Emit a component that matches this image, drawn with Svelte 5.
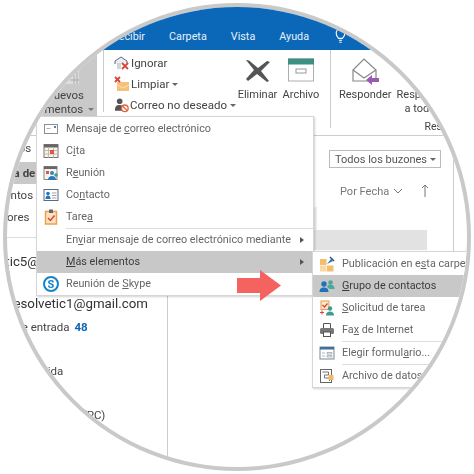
<script>
    const tabs = ["Recibir", "Carpeta", "Vista", "Ayuda"]

    const mainItems = [
        { icon: "mail", pre: "Mensaje de ", key: "c", post: "orreo electrónico" },
        { icon: "cal", pre: "C", key: "i", post: "ta" },
        { icon: "meet", pre: "R", key: "e", post: "unión" },
        { icon: "card", pre: "Co", key: "n", post: "tacto" },
        { icon: "task", pre: "Tare", key: "a", post: "", sep: true },
        { pre: "En", key: "v", post: "iar mensaje de correo electrónico mediante", arrow: true },
        { pre: "", key: "M", post: "ás elementos", arrow: true, active: true },
        { icon: "skype", pre: "Reunión de ", key: "S", post: "kype" }
    ]

    const subItems = [
        { icon: "post", pre: "Publicación en e", key: "s", post: "ta carpeta" },
        { icon: "group", pre: "", key: "G", post: "rupo de contactos", active: true },
        { icon: "request", pre: "", key: "S", post: "olicitud de tarea" },
        { icon: "fax", pre: "Fa", key: "x", post: " de Internet", sep: true },
        { icon: "form", pre: "Elegir formul", key: "a", post: "rio...", sep: true },
        { icon: "data", pre: "Archivo de datos", key: "", post: "" }
    ]
</script>

{#snippet icon(name)}
    <svg class="ico" viewBox="0 0 16 16" width="16" height="16">
        {#if name === "mail"}
            <rect x="1.5" y="3.5" width="13" height="9" fill="#fff" stroke="#8a8f94" />
            <rect x="3.5" y="7" width="4" height="1" fill="#a8b4c0" />
            <rect x="11" y="5" width="2" height="2" fill="#5b7fa6" />
        {:else if name === "cal"}
            <rect x="1" y="1.5" width="14" height="13" fill="#f6f2ec" stroke="#777" />
            <rect x="1" y="1.5" width="14" height="3" fill="#666" />
            <path d="M1 7.5h14M1 11h14M5.5 4.5v10M10.5 4.5v10" stroke="#c9b9a8" />
            <rect x="7" y="7" width="4" height="4" fill="#e0564f" />
        {:else if name === "meet"}
            <rect x="1" y="1.5" width="13" height="13" fill="#f6f2ec" stroke="#888" />
            <rect x="1" y="1.5" width="13" height="2.5" fill="#666" />
            <rect x="3" y="6" width="3" height="3" fill="#e0564f" />
            <circle cx="9" cy="8" r="2" fill="#2e86c8" />
            <path d="M5 15c0-3 2-4 4-4s4 1 4 4z" fill="#2a78b8" />
            <circle cx="13" cy="10" r="1.8" fill="#3f9d94" />
        {:else if name === "card"}
            <rect x="1" y="2.5" width="14" height="11" fill="#fff" stroke="#5a6b80" />
            <circle cx="5" cy="6.5" r="1.8" fill="#1f74c0" />
            <path d="M2.5 12c0-2.5 1-3.500 2.500-3.500s2.500 1 2.500 3.500z" fill="#1f74c0" />
            <path d="M9 6h4.500M9 8.500h4.500M9 11h4.500" stroke="#9aa5b0" />
        {:else if name === "task"}
            <rect x="2.500" y="2.500" width="11" height="12.500" fill="#fbe3c2" stroke="#eca14e" stroke-width="1.500" />
            <rect x="6" y="0.500" width="4" height="3.500" fill="#666" />
            <path d="M5 9l2.500 2.500L11.500 6.500" fill="none" stroke="#d9433a" stroke-width="1.500" />
        {:else if name === "skype"}
            <circle cx="8" cy="8" r="7" fill="#fff" stroke="#1583c9" stroke-width="2" />
            <text x="8" y="12" text-anchor="middle" class="skype-s">S</text>
        {:else if name === "post"}
            <rect x="1" y="3" width="6.500" height="6" fill="#f6bd6d" />
            <rect x="1" y="9.500" width="6.500" height="6" fill="#f9d8a4" />
            <rect x="8" y="9.500" width="6.500" height="6" fill="#f6bd6d" />
            <path d="M8 8l4-5 2 2z" fill="#2a78b8" />
            <path d="M11 1l4 4" stroke="#24507e" stroke-width="1.500" />
        {:else if name === "group"}
            <circle cx="5" cy="6" r="2.700" fill="#1f74b8" />
            <path d="M0.500 14c0-3.500 2-4.500 4.500-4.500s4.500 1 4.500 4.500z" fill="#1f74b8" />
            <circle cx="11.500" cy="4.500" r="2.300" fill="#4da79c" />
            <path d="M8 9c.5-2 2-2.500 3.500-2.500s4 .7 4 4.500h-5z" fill="#4da79c" />
        {:else if name === "request"}
            <rect x="2" y="1" width="8" height="8.500" fill="#fbe9d2" stroke="#e89b4a" />
            <path d="M3.500 5l2 2 3-3.500" fill="none" stroke="#d9433a" stroke-width="1.200" />
            <circle cx="11" cy="8.500" r="2.200" fill="#3d9a8f" />
            <path d="M7 15.500c0-3 1.800-4 4-4s4 1 4 4z" fill="#3d9a8f" />
            <path d="M1 12.500h4M3 10.500v4" stroke="#d9433a" />
        {:else if name === "fax"}
            <path d="M4.500 6V1.500h7V6" fill="#fff" stroke="#555" />
            <rect x="1" y="6" width="14" height="6" rx="1.500" fill="#777" />
            <rect x="4.500" y="10" width="7" height="4.500" fill="#fff" stroke="#555" />
        {:else if name === "form"}
            <rect x="1" y="2" width="14" height="12" fill="#fff" stroke="#7a8794" />
            <rect x="1" y="2" width="14" height="2.500" fill="#3f6f9c" />
            <path d="M3 8h3M3 11h3M8 7.500h5v1.500h-5zM8 10.500h5v1.500h-5z" fill="none" stroke="#9aa5b0" stroke-width=".8" />
        {:else if name === "data"}
            <rect x="1.500" y="1.500" width="11" height="13" fill="#fff" stroke="#666" />
            <path d="M3.500 4h6v3h-4v3h5v3" fill="none" stroke="#777" />
            <rect x="9.500" y="7" width="5" height="5" fill="#f3b76a" />
        {/if}
    </svg>
{/snippet}

{#snippet rows(items)}
    {#each items as item}
        <div class="row" class:active={item.active}>
            <span class="slot">
                {#if item.icon}{@render icon(item.icon)}{/if}
            </span>
            <span class="label">{item.pre}<u>{item.key}</u>{item.post}</span>
            {#if item.arrow}<span class="caret"></span>{/if}
        </div>
        {#if item.sep}<div class="sep"></div>{/if}
    {/each}
{/snippet}

<div class="lens">
    <div class="tabs">
        {#each tabs as tab}
            <span class="tab">{tab}</span>
        {/each}
        <svg class="bulb" viewBox="0 0 14 20" width="11" height="16">
            <path d="M4.500 13C3 11 1.500 9.500 1.500 6.500a5.500 5.500 0 0 1 11 0C12.500 9.500 11 11 9.500 13z" fill="none" stroke="#fff" stroke-width="1.400" />
            <path d="M5 15.500h4M5.500 18h3" stroke="#fff" stroke-width="1.400" />
        </svg>
    </div>

    <div class="ribbon">
        <div class="new-group">
            <svg class="new-ico" viewBox="0 0 16 16" width="16" height="16">
                <path d="M1 15L15 1v14z" fill="#ddd" />
                <path d="M6 11h9M10 6v9M13 3v12" stroke="#aaa" />
            </svg>
            <span class="first-line">Nuevos</span>
            <span class="second-line">elementos <i class="drop dark"></i></span>
        </div>

        <div class="quick">
            <div class="quick-row">
                <svg viewBox="0 0 16 16" width="16" height="16">
                    <path d="M1 9V6l6-4 6 4v2" fill="#e8eef3" stroke="#667" />
                    <path d="M3 8h4v6H3z" fill="#cfd6da" />
                    <path d="M8 8l6 6M14 8l-6 6" stroke="#d9453a" stroke-width="1.800" />
                </svg>
                Ignorar
            </div>
            <div class="quick-row">
                <svg viewBox="0 0 16 16" width="16" height="16">
                    <rect x="3" y="6" width="12" height="9" fill="#f4c07a" />
                    <path d="M3 9l6 3 6-3" fill="none" stroke="#fbe2bb" />
                    <path d="M1 1l5 5M6 1L1 6" stroke="#d9453a" stroke-width="1.800" />
                </svg>
                Limpiar <i class="drop"></i>
            </div>
            <div class="quick-row">
                <svg viewBox="0 0 16 16" width="16" height="16">
                    <circle cx="6" cy="4" r="3" fill="#555" />
                    <path d="M1 14c0-5 2-6 5-6s4 1 4 3v3z" fill="#555" />
                    <circle cx="11.500" cy="11.500" r="3.500" fill="#fff" stroke="#e0663a" stroke-width="1.400" />
                    <path d="M9 9l5 5" stroke="#e0663a" stroke-width="1.400" />
                </svg>
                Correo no deseado <i class="drop"></i>
            </div>
        </div>

        <div class="big first">
            <svg viewBox="0 0 28 26" width="28" height="26">
                <path d="M2 2c3 0 4 1 6 3l6 5 9-7 3 1-9 9 8 10-2 1-10-8-9 7-2-2 8-9z" fill="#555" />
            </svg>
            <span>Eliminar</span>
        </div>
        <div class="big second-big">
            <svg viewBox="0 0 28 24" width="28" height="24">
                <rect x="1.500" y="1" width="25" height="22" fill="#fff" stroke="#a8b0b4" />
                <rect x="1" y="0.500" width="26" height="6" fill="#3d8f84" />
                <rect x="9" y="11" width="10" height="4" fill="#fff" stroke="#999" />
            </svg>
            <span>Archivo</span>
        </div>
        <div class="big reply">
            <svg viewBox="0 0 28 28" width="28" height="28">
                <path d="M2 12L13 1l12 11v11H2z" fill="#fff" stroke="#888" stroke-width="1.200" />
                <path d="M2 12l11 8 12-8" fill="none" stroke="#888" stroke-width="1.200" />
                <path d="M15 22l6-5v3h7v4h-7v3z" fill="#9b59b6" />
            </svg>
            <span>Responder</span>
        </div>
        <div class="big reply-all">
            <span>Responder</span>
            <span class="all">a todos</span>
            <span class="group-name">Responder</span>
        </div>
    </div>

    <div class="body">
        <div class="folders">
            <div class="fav-list">
                <div class="folder fav">Favoritos</div>
                <div class="folder inbox">Bandeja de entrada</div>
                <div class="folder sent">Elementos enviados</div>
                <div class="folder drafts">Borradores</div>
            </div>
            <div class="account short">soporte.solvetic5@gmail.com</div>
            <div class="account">resolvetic1@gmail.com</div>
            <div class="folder mail-in">Bandeja de entrada <b>48</b></div>
            <div class="folder mail-out">Bandeja de salida</div>
            <div class="folder mail-pc">Este equipo (PC)</div>
        </div>

        <div class="messages">
            <div class="search">
                <div class="scope">Todos los buzones <i class="drop"></i></div>
            </div>
            <div class="sort">
                <span>Por Fecha</span>
                <svg viewBox="0 0 10 6" width="10" height="6">
                    <path d="M1 1l4 4 4-4" fill="none" stroke="#777" />
                </svg>
                <svg class="up" viewBox="0 0 8 14" width="8" height="14">
                    <path d="M4 13V1M1 4l3-3 3 3" fill="none" stroke="#777" />
                </svg>
            </div>
            <div class="band pale"></div>
            <div class="band"></div>
        </div>
    </div>

    <div class="menu main-menu">
        {@render rows(mainItems)}
    </div>

    <div class="menu sub-menu">
        {@render rows(subItems)}
    </div>

    <svg class="pointer" viewBox="0 0 44 31" width="44" height="31">
        <path d="M0 8h23V0l21 15.500-21 15.500v-8H0z" fill="#f4635f" />
    </svg>
</div>

<style>
    :global(body) {
        background: #fff;
    }
    .lens {
        position: relative;
        box-sizing: border-box;
        width: 468px;
        height: 468px;
        margin: 3px;
        border: 4px solid #c9c9c9;
        border-radius: 50%;
        overflow: hidden;
        background: #fff;
        font-family: Roboto, sans-serif;
        font-size: 10.8px;
        color: #444;
        filter: blur(0.35px);
    }
    .tabs {
        display: flex;
        align-items: center;
        gap: 24px;
        height: 43px;
        padding: 15px 0 0 105px;
        box-sizing: border-box;
        background: #0b67b7;
        color: #e8f1f9;
        font-size: 10.800px;
    }
    .bulb {
        margin-left: 2px;
    }
    .ribbon {
        display: flex;
        height: 85px;
        border-bottom: 1px solid #ccc;
    }
    .ribbon > * {
        flex: none;
    }
    .new-group {
        display: flex;
        flex-direction: column;
        align-items: flex-end;
        box-sizing: border-box;
        width: 90px;
        height: 66px;
        padding-top: 19px;
        background: #c9c9c9;
        line-height: 14px;
        font-size: 11.500px;
    }
    .first-line {
        margin-right: 13px;
    }
    .second-line {
        margin-right: 3px;
        white-space: nowrap;
    }
    .new-ico {
        flex: none;
        margin-right: 17px;
        margin-bottom: 3px;
    }
    .quick {
        display: flex;
        flex-direction: column;
        gap: 5px;
        box-sizing: border-box;
        width: 133px;
        margin-left: 6px;
        padding: 5px 0 0 10px;
        border-left: 1px solid #ccc;
        height: 62px;
        font-size: 11.500px;
    }
    .quick-row {
        display: flex;
        align-items: center;
        gap: 1px;
        height: 16px;
        white-space: nowrap;
    }
    .big {
        display: flex;
        flex-direction: column;
        align-items: center;
        gap: 4px;
        padding-top: 8px;
        font-size: 11px;
        white-space: nowrap;
    }
    .first {
        width: 39px;
        margin-left: 2px;
    }
    .second-big {
        width: 40px;
        margin-left: 4px;
    }
    .second-big svg {
        margin-bottom: 2px;
    }
    .reply {
        margin-left: 9px;
        padding-left: 8px;
        border-left: 1px solid #ccc;
        height: 70px;
    }
    .reply svg {
        margin-bottom: -2px;
    }
    .reply-all {
        align-items: flex-start;
        padding: 38px 0 0 5px;
        gap: 0;
        line-height: 14px;
    }
    .all {
        margin-left: 8px;
    }
    .group-name {
        margin-top: 4px;
        margin-left: 28px;
        font-size: 10.500px;
    }
    .drop {
        display: inline-block;
        width: 0;
        height: 0;
        margin-left: 2px;
        vertical-align: middle;
        border: 3px solid transparent;
        border-top-color: #666;
        border-bottom: 0;
    }
    .drop.dark {
        border-top-color: #777;
    }
    .body {
        display: flex;
        height: 323px;
    }
    .folders {
        flex: none;
        box-sizing: border-box;
        width: 161px;
        border-right: 1px solid #ccc;
        white-space: nowrap;
    }
    .fav-list {
        height: 100px;
        border-bottom: 1px solid #ddd;
    }
    .folder {
        height: 22px;
        line-height: 22px;
        font-size: 11.500px;
    }
    .fav {
        margin-left: -23px;
        margin-top: 1px;
    }
    .inbox {
        font-weight: 700;
        margin-top: 3px;
        margin-left: -36px;
        padding-left: 7px;
        background: #c9c9c9;
    }
    .sent {
        margin-left: -28px;
    }
    .drafts {
        margin-left: -34px;
    }
    .account {
        height: 24px;
        font-size: 13.300px;
        color: #333;
        line-height: 24px;
    }
    .short {
        margin-top: 12px;
        margin-left: -82px;
        margin-bottom: 18px;
    }
    .account:not(.short) {
        margin-left: 2px;
    }
    .mail-in {
        margin-left: -36px;
    }
    .mail-in b {
        margin-left: 2px;
        color: #0b67b7;
        font-weight: 700;
    }
    .mail-out {
        margin-top: 22px;
        margin-left: -34px;
    }
    .mail-pc {
        margin-top: 22px;
        margin-left: 13px;
    }
    .messages {
        flex: none;
        box-sizing: border-box;
        width: 286px;
        padding-left: 145px;
        border-right: 1px solid #ccc;
    }
    .search {
        display: flex;
        padding: 14px 0 0 16px;
    }
    .scope {
        display: flex;
        justify-content: space-between;
        align-items: center;
        flex: none;
        box-sizing: border-box;
        width: 112px;
        height: 18px;
        padding: 0 4px 0 5px;
        border: 1px solid #bbb;
        font-size: 11px;
        color: #555;
        white-space: nowrap;
    }
    .sort {
        display: flex;
        align-items: center;
        gap: 4px;
        margin: 16px 0 0 27px;
        font-size: 11px;
        color: #777;
        white-space: nowrap;
    }
    .sort svg {
        flex: none;
    }
    .sort .up {
        margin-left: 14px;
    }
    .band {
        width: 114px;
        height: 20px;
        background: #e2e2e2;
    }
    .band.pale {
        width: 4px;
        height: 23px;
        margin-top: 9px;
        background: #eee;
    }
    .menu {
        position: absolute;
        box-sizing: border-box;
        background: #fff;
        border: 1px solid #d6d6d6;
        box-shadow: 1px 1px 2px rgba(0, 0, 0, 0.18);
        color: #666;
    }
    .main-menu {
        left: 29px;
        top: 109px;
        width: 278px;
        padding-top: 1px;
    }
    .sub-menu {
        left: 305px;
        top: 244px;
        width: 200px;
        padding-top: 1px;
    }
    .row {
        display: flex;
        align-items: center;
        height: 22px;
        white-space: nowrap;
    }
    .row.active {
        background: #c8c8c8;
        color: #3c3c3c;
    }
    .slot {
        display: flex;
        justify-content: center;
        flex: none;
        width: 28px;
        margin-right: 1px;
    }
    .ico {
        display: block;
    }
    .label {
        flex: 1;
        padding-bottom: 2px;
    }
    .caret {
        width: 0;
        height: 0;
        margin-right: 9px;
        border: 3.500px solid transparent;
        border-left: 4px solid #555;
        border-right: 0;
    }
    .sep {
        height: 1px;
        margin-left: 29px;
        background: #ddd;
    }
    .skype-s {
        font: 700 11px Roboto, sans-serif;
        fill: #1583c9;
    }
    .pointer {
        position: absolute;
        left: 230px;
        top: 263px;
    }
</style>
